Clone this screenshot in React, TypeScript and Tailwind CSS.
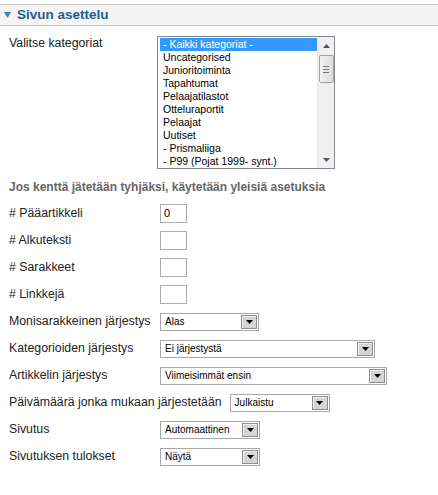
import React from "react";

const items = [
  "- Kaikki kategoriat -",
  "Uncategorised",
  "Junioritoiminta",
  "Tapahtumat",
  "Pelaajatilastot",
  "Otteluraportit",
  "Pelaajat",
  "Uutiset",
  "- Prismaliiga",
  "- P99 (Pojat 1999- synt.)",
];

function DropBtn() {
  return (
    <div className="w-[16px] h-[14px] border border-[#8f8f8f] bg-[#d4d4d4] flex items-center justify-center shadow-[inset_1px_1px_0_#f2f2f2]">
      <svg width="7" height="4" viewBox="0 0 7 4">
        <path d="M0 0 H7 L3.5 4 Z" fill="#000" />
      </svg>
    </div>
  );
}

function Select({ value, w }: { value: string; w: string }) {
  return (
    <div
      className={`ml-[3px] h-[18px] border border-[#a9a9a9] bg-white flex items-center justify-between pl-[4px] pr-[1px] ${w}`}
    >
      <span className="text-[10px] text-black leading-none">{value}</span>
      <DropBtn />
    </div>
  );
}

function TextInput({ value }: { value?: string }) {
  return (
    <div className="ml-[3px] w-[27px] h-[19px] border border-[#abadb3] bg-white flex items-center pl-[3px]">
      <span className="text-[11px] text-black leading-none">{value}</span>
    </div>
  );
}

function Row({ label, children }: { label: string; children: React.ReactNode }) {
  return (
    <div className="h-[27px] flex items-center">
      <div className="min-w-[148px] pr-[5px] text-[12.3px] text-[#222] whitespace-nowrap">{label}</div>
      {children}
    </div>
  );
}

export default function App() {
  return (
    <div className="w-[438px] h-[495px] bg-white font-['Liberation_Sans',Arial,sans-serif] overflow-hidden">
      <div className="mt-[4px] h-[22px] border-t border-b border-[#c6c6c6] bg-[#f4f4f4] flex items-center pl-[4px]">
        <svg width="7" height="6" viewBox="0 0 7 6">
          <path d="M0 0 H7 L3.5 6 Z" fill="#3d87b4" />
        </svg>
        <span className="ml-[6px] text-[13.5px] font-bold text-[#1c5e8c] leading-none">Sivun asettelu</span>
      </div>

      <div className="pl-[9px] pt-[10px]">
        <div className="flex items-start">
          <div className="w-[148px] text-[12.3px] leading-[15px] text-[#222]">Valitse kategoriat</div>
          <div className="w-[178px] h-[133px] border border-[#828790] bg-white flex">
            <div className="flex-1 pl-[2px] pt-[1px]">
              {items.map((it, i) => (
                <div
                  key={it}
                  className={`h-[13px] pl-[3px] text-[10.5px] leading-[13px] whitespace-nowrap ${
                    i === 0 ? "bg-[#3399ff] text-white" : "text-black"
                  }`}
                >
                  {it}
                </div>
              ))}
            </div>
            <div className="w-[17px] h-full bg-[#f0f0f0] border-l border-[#e8e8e8] flex flex-col items-center">
              <div className="h-[17px] w-full flex items-center justify-center">
                <svg width="7" height="4" viewBox="0 0 7 4">
                  <path d="M0 4 H7 L3.5 0 Z" fill="#555" />
                </svg>
              </div>
              <div className="w-[15px] h-[28px] mt-[1px] rounded-[2px] border border-[#a2a2a2] bg-gradient-to-r from-[#f2f2f2] to-[#dcdcdc] flex flex-col items-center justify-center gap-[2px]">
                <div className="w-[6px] h-px bg-[#777]" />
                <div className="w-[6px] h-px bg-[#777]" />
                <div className="w-[6px] h-px bg-[#777]" />
              </div>
              <div className="flex-1" />
              <div className="h-[17px] w-full flex items-center justify-center">
                <svg width="7" height="4" viewBox="0 0 7 4">
                  <path d="M0 0 H7 L3.5 4 Z" fill="#555" />
                </svg>
              </div>
            </div>
          </div>
        </div>

        <div className="h-[31px] pt-[5px] flex items-center text-[12px] font-bold text-[#666] whitespace-nowrap">
          Jos kenttä jätetään tyhjäksi, käytetään yleisiä asetuksia
        </div>

        <Row label="# Pääartikkeli">
          <TextInput value="0" />
        </Row>
        <Row label="# Alkuteksti">
          <TextInput />
        </Row>
        <Row label="# Sarakkeet">
          <TextInput />
        </Row>
        <Row label="# Linkkejä">
          <TextInput />
        </Row>
        <Row label="Monisarakkeinen järjestys">
          <Select value="Alas" w="w-[99px]" />
        </Row>
        <Row label="Kategorioiden järjestys">
          <Select value="Ei järjestystä" w="w-[215px]" />
        </Row>
        <Row label="Artikkelin järjestys">
          <Select value="Viimeisimmät ensin" w="w-[227px]" />
        </Row>
        <Row label="Päivämäärä jonka mukaan järjestetään">
          <Select value="Julkaistu" w="w-[100px]" />
        </Row>
        <Row label="Sivutus">
          <Select value="Automaattinen" w="w-[100px]" />
        </Row>
        <Row label="Sivutuksen tulokset">
          <Select value="Näytä" w="w-[100px]" />
        </Row>
      </div>
    </div>
  );
}
